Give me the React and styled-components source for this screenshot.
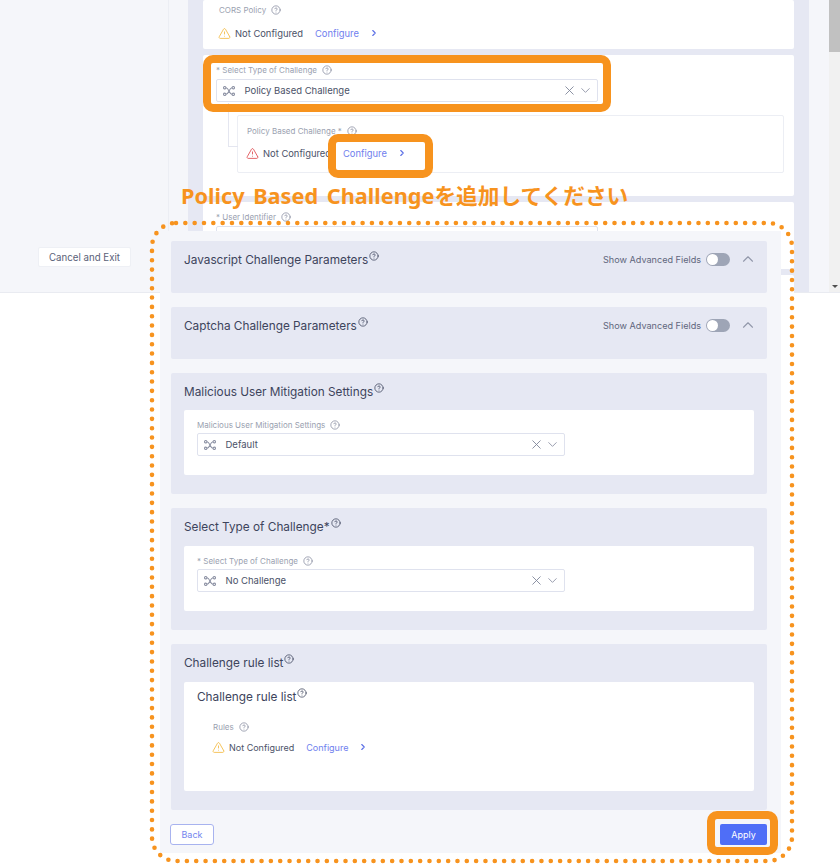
import React from 'react'
import styled, { createGlobalStyle } from 'styled-components'
import { ChevronDown, ChevronRight, ChevronUp, CircleHelp, TriangleAlert, X } from 'lucide-react'

const GlobalStyle = createGlobalStyle`
  html, body {
    margin: 0;
    padding: 0;
    background: #fff;
    font-family: Inter, "Noto Sans", sans-serif;
  }
`

const Page = styled.div`
  position: relative;
  width: 840px;
  height: 864px;
  overflow: hidden;
  background: #fff;
`

/* wizard behind the panel */
const Backdrop = styled.div`
  display: flex;
  height: 293px;
  border-bottom: 1px solid #e9ebf1;
  box-sizing: border-box;
  background: #f5f6fa;
`
const Sidebar = styled.div`
  width: 169px;
  flex: none;
  box-sizing: border-box;
  border-right: 1px solid #eceef4;
  padding: 247px 0 0 38px;
`
const CancelButton = styled.button`
  display: block;
  width: 93px;
  height: 20px;
  padding: 0;
  border: 1px solid #eef0f5;
  border-radius: 2px;
  background: #fff;
  color: #5a6178;
  font: 400 9.7px Inter, sans-serif;
`
const Gutter = styled.div`
  width: 19px;
  flex: none;
`
const FormBand = styled.div`
  width: 621px;
  flex: none;
  box-sizing: border-box;
  padding: 0 15px;
  background: #e6e8f3;
  display: flex;
  flex-direction: column;
  gap: 6px;
`
const FormCard = styled.div`
  flex: none;
  height: ${p => p.$h}px;
  box-sizing: border-box;
  padding: ${p => p.$pad || '8px 16px 0'};
  background: #fff;
  border-radius: 2px;
`
const Scroll = styled.div`
  margin-left: 20px;
  width: 11px;
  flex: none;
  position: relative;
  background: #f1f1f1;
`
const Thumb = styled.div`
  height: 52px;
  background: #c1c1c1;
`
const ScrollArrow = styled.div`
  position: absolute;
  left: 3px;
  bottom: 4px;
  border-left: 3px solid transparent;
  border-right: 3px solid transparent;
  border-top: 3px solid #505050;
`

const Label = styled.div`
  display: flex;
  align-items: center;
  gap: 5px;
  height: 10px;
  font-size: 8px;
  line-height: 10px;
  color: #9a9fb0;
  white-space: nowrap;
  svg { flex: none; color: #7d8397; }
`
const StatusRow = styled.div`
  display: flex;
  align-items: center;
  height: 14px;
  margin-top: ${p => p.$mt || 11}px;
  font-size: ${p => p.$fs || 9.4}px;
  color: #4b5268;
  white-space: nowrap;
`
const Warning = styled(TriangleAlert)`
  flex: none;
  margin-left: -1px;
`
const StatusText = styled.span`
  margin-left: 4px;
`
const ConfigureLink = styled.span`
  margin-left: 12px;
  color: #6f80ee;
`
const LinkArrow = styled(ChevronRight)`
  margin-left: 10px;
  color: #5b6fe6;
`

const Select = styled.div`
  display: flex;
  align-items: center;
  width: ${p => p.$w || 368}px;
  height: 23px;
  margin-top: ${p => p.$mt || 3}px;
  box-sizing: border-box;
  padding: 0 4px 0 6px;
  border: 1px solid #dfe2ee;
  border-radius: 2px;
  background: #fff;
  font-size: 9.5px;
  color: #4b5268;
`
const SelectValue = styled.span`
  flex: 1;
  margin-left: 9.5px;
`
const Clear = styled(X)`
  color: #7d8397;
`
const Caret = styled(ChevronDown)`
  margin-left: 1px;
  color: #8b90a3;
`

const Nested = styled.div`
  position: relative;
  margin: 13px -1px 0 21px;
  width: 547px;
  height: 58px;
  box-sizing: border-box;
  padding: 10px 9px 0;
  border: 1px solid #eceef4;
  border-radius: 2px;
  background: #fff;
`
const Connector = styled.div`
  position: absolute;
  left: -10px;
  top: -13px;
  width: 9px;
  height: 43px;
  border-left: 1px solid #e4e6f0;
  border-bottom: 1px solid #e4e6f0;
`

/* form panel lying over the wizard */
const Panel = styled.div`
  position: absolute;
  left: 160px;
  top: 231px;
  width: 621px;
  height: 622px;
  box-sizing: border-box;
  padding: 10px 14px 0 11px;
  background: #f5f6fa;
  display: flex;
  flex-direction: column;
`
const Section = styled.section`
  flex: none;
  height: ${p => p.$h}px;
  margin-bottom: 14px;
  box-sizing: border-box;
  padding: 6px 13px 0;
  background: #e6e8f3;
  border-radius: 2px;
`
const SectionHead = styled.div`
  display: flex;
  align-items: center;
  height: 24px;
  margin-bottom: ${p => p.$gap || 7}px;
`
const Title = styled.h3`
  flex: 1;
  display: flex;
  align-items: flex-start;
  margin: 0;
  padding-top: 1px;
  font-size: 11.8px;
  line-height: 16px;
  font-weight: 400;
  color: #3d445c;
  white-space: nowrap;
  svg {
    margin: -1px 0 0 1px;
    color: #2f3650;
  }
`
const Advanced = styled.span`
  font-size: 9.1px;
  color: #5f667c;
`
const Toggle = styled.span`
  position: relative;
  width: 24px;
  height: 13px;
  margin-left: 5px;
  border-radius: 7px;
  background: #9ea5b6;
  &::before {
    content: '';
    position: absolute;
    left: 1px;
    top: 1px;
    width: 11px;
    height: 11px;
    border-radius: 50%;
    background: #fff;
  }
`
const Collapse = styled(ChevronUp)`
  margin: 0 -3px 0 9px;
  color: #9298aa;
`
const WhiteCard = styled.div`
  height: ${p => p.$h}px;
  box-sizing: border-box;
  padding: ${p => p.$pt || 10}px 13px 0;
  background: #fff;
  border-radius: 2px;
`
const RulesBlock = styled.div`
  margin: 17px 0 0 16px;
`
const Footer = styled.div`
  display: flex;
  justify-content: space-between;
`
const BackButton = styled.button`
  width: 44px;
  height: 21px;
  margin-left: -1px;
  padding: 0;
  border: 1px solid #a8b3ef;
  border-radius: 3px;
  background: #fff;
  color: #7486ee;
  font: 400 9px Inter, sans-serif;
`
const ApplyButton = styled.button`
  width: 47px;
  height: 21px;
  padding: 0;
  border: 0;
  border-radius: 2px;
  background: #4f6ef7;
  color: #fff;
  font: 400 9px Inter, sans-serif;
`

/* orange annotations */
const Box = styled.div`
  position: absolute;
  left: ${p => p.$x}px;
  top: ${p => p.$y}px;
  width: ${p => p.$w}px;
  height: ${p => p.$h}px;
  box-sizing: border-box;
  border: 8px solid #f7931e;
  border-radius: 10px;
`
const DottedFrame = styled.svg`
  position: absolute;
  left: 148px;
  top: 219px;
  width: 648px;
  height: 646px;
`
const Note = styled.div`
  position: absolute;
  left: 181px;
  top: 180px;
  font-family: "Noto Sans", "Noto Sans CJK JP", sans-serif;
  font-size: 21.7px;
  line-height: 32px;
  font-weight: 700;
  word-spacing: 3px;
  color: #f7931e;
  white-space: nowrap;
`

const Nodes = () => (
  <svg width="12" height="10" viewBox="0 0 12 10" fill="none" stroke="#8f94a6" strokeWidth="1.1">
    <circle cx="1.7" cy="1.7" r="1.2" />
    <circle cx="10.3" cy="1.7" r="1.2" />
    <circle cx="1.7" cy="8.3" r="1.2" />
    <circle cx="10.3" cy="8.3" r="1.2" />
    <path d="M3 1.7C6 1.7 6 8.3 9 8.3M3 8.3C6 8.3 6 1.7 9 1.7" />
  </svg>
)

const Help = ({ size = 10 }) => <CircleHelp size={size} strokeWidth={1.7} />

const SelectField = ({ value, w, mt }) => (
  <Select $w={w} $mt={mt}>
    <Nodes />
    <SelectValue>{value}</SelectValue>
    <Clear size={15} strokeWidth={1.4} />
    <Caret size={15} strokeWidth={1.4} />
  </Select>
)

const Status = ({ color = '#f4bf4f', mt, fs }) => (
  <StatusRow $mt={mt} $fs={fs}>
    <Warning size={13} strokeWidth={1.7} color={color} />
    <StatusText>Not Configured</StatusText>
    <ConfigureLink>Configure</ConfigureLink>
    <LinkArrow size={10} strokeWidth={2.6} />
  </StatusRow>
)

const ParamSection = ({ title }) => (
  <Section $h={52}>
    <SectionHead>
      <Title>{title}<Help /></Title>
      <Advanced>Show Advanced Fields</Advanced>
      <Toggle />
      <Collapse size={18} strokeWidth={1.5} />
    </SectionHead>
  </Section>
)

const FieldSection = ({ title, label, value, h, gap }) => (
  <Section $h={h}>
    <SectionHead $gap={gap}>
      <Title>{title}<Help /></Title>
    </SectionHead>
    <WhiteCard $h={65}>
      <Label>{label}<Help /></Label>
      <SelectField value={value} />
    </WhiteCard>
  </Section>
)

export default function App() {
  return (
    <Page>
      <GlobalStyle />
      <Backdrop>
        <Sidebar>
          <CancelButton>Cancel and Exit</CancelButton>
        </Sidebar>
        <Gutter />
        <FormBand>
          <FormCard $h={49} $pad="5px 16px 0">
            <Label>CORS Policy<Help /></Label>
            <Status mt={11} />
          </FormCard>
          <FormCard $h={141} $pad="10px 13px 0">
            <Label>* Select Type of Challenge<Help /></Label>
            <SelectField value="Policy Based Challenge" w={382} mt={4} />
            <Nested>
              <Connector />
              <Label>Policy Based Challenge *<Help /></Label>
              <Status color="#e0575b" mt={10} />
            </Nested>
          </FormCard>
          <FormCard $h={67} $pad="10px 13px 0">
            <Label>* User Identifier<Help /></Label>
            <SelectField value="" w={382} mt={4} />
          </FormCard>
          <FormCard $h={20} />
        </FormBand>
        <Scroll>
          <Thumb />
          <ScrollArrow />
        </Scroll>
      </Backdrop>

      <Panel>
        <ParamSection title="Javascript Challenge Parameters" />
        <ParamSection title="Captcha Challenge Parameters" />
        <FieldSection
          h={121}
          title="Malicious User Mitigation Settings"
          label="Malicious User Mitigation Settings"
          value="Default"
        />
        <FieldSection
          h={122}
          gap={8}
          title="Select Type of Challenge*"
          label="* Select Type of Challenge"
          value="No Challenge"
        />
        <Section $h={166}>
          <SectionHead $gap={8}>
            <Title>Challenge rule list<Help /></Title>
          </SectionHead>
          <WhiteCard $h={109} $pt={6}>
            <Title>Challenge rule list<Help /></Title>
            <RulesBlock>
              <Label>Rules<Help /></Label>
              <Status mt={8} fs={9} />
            </RulesBlock>
          </WhiteCard>
        </Section>
        <Footer>
          <BackButton>Back</BackButton>
          <ApplyButton>Apply</ApplyButton>
        </Footer>
      </Panel>

      <Box $x={203} $y={55} $w={408} $h={57} />
      <Box $x={328} $y={134} $w={105} $h={44} />
      <Box $x={707} $y={811} $w={71} $h={44} />
      <DottedFrame viewBox="0 0 648 646" fill="none">
        <rect
          x="4"
          y="4"
          width="640"
          height="638"
          rx="24"
          stroke="#f7931e"
          strokeWidth="4.6"
          strokeLinecap="round"
          strokeDasharray="0 9.33"
        />
      </DottedFrame>
      <Note>Policy Based Challengeを追加してください</Note>
    </Page>
  )
}
